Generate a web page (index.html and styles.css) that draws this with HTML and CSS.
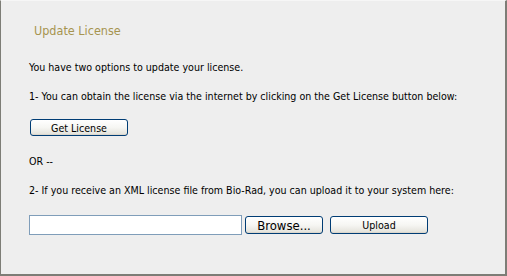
FILE: index.html
```html
<!DOCTYPE html>
<html>
<head>
<meta charset="utf-8">
<link rel="stylesheet" href="styles.css">
</head>
<body>
<div class="panel">
  <div class="title">Update License</div>
  <p class="line l1">You have two options to update your license.</p>
  <p class="line l2">1- You can obtain the license via the internet by clicking on the Get License button below:</p>
  <button class="btn get">Get License</button>
  <p class="line l3">OR --</p>
  <p class="line l4">2- If you receive an XML license file from Bio-Rad, you can upload it to your system here:</p>
  <div class="uprow">
    <input class="file" type="text">
    <button class="btn browse">Browse...</button>
    <button class="btn upload">Upload</button>
  </div>
</div>
</body>
</html>
```
FILE: styles.css
```css
html, body { margin: 0; padding: 0; }
body { background: #eeeeee; }
.panel {
  width: 507px;
  height: 276px;
  box-sizing: border-box;
  background: #eeeeee;
  border-left: 1px solid #7d7d76;
  border-top: 1px solid #f6f6f6;
  border-right: 2px solid #7d7d76;
  border-bottom: 2px solid #7d7d76;
  padding: 22px 0 0 28px;
  font-family: "DejaVu Sans Condensed", "DejaVu Sans", sans-serif;
  font-size: 10.6px;
  color: #000;
  display: flex;
  flex-direction: column;
  align-items: flex-start;
}
.title {
  margin-left: 5px;
  font-size: 12.5px;
  line-height: 16px;
  color: #a69450;
}
.line { margin: 0; line-height: 14px; white-space: nowrap; }
.l1 { margin-top: 21px; }
.l2 { margin-top: 15px; }
.l3 { margin-top: 18px; }
.l4 { margin-top: 15px; }
.btn {
  font-family: "DejaVu Sans Condensed", "DejaVu Sans", sans-serif;
  font-size: 10.6px;
  color: #000;
  border: 1px solid #003c74;
  border-radius: 3px;
  background: linear-gradient(#ffffff 0%, #f6f6f3 50%, #e6e5de 90%, #d6d0c5 100%);
  padding: 0;
  margin: 0;
  box-sizing: border-box;
}
.get { margin-top: 16px; margin-left: 1px; width: 98px; height: 17px; }
.uprow { margin-top: 18px; display: flex; align-items: flex-start; }
.file {
  width: 213px;
  height: 20px;
  box-sizing: border-box;
  border: 1px solid #7f9db9;
  background: #fff;
  margin: 0;
  padding: 0;
}
.browse { margin-left: 3px; margin-top: 1px; width: 78px; height: 18px; font-size: 13px; }
.upload { margin-left: 7px; margin-top: 1px; width: 98px; height: 18px; }
```
